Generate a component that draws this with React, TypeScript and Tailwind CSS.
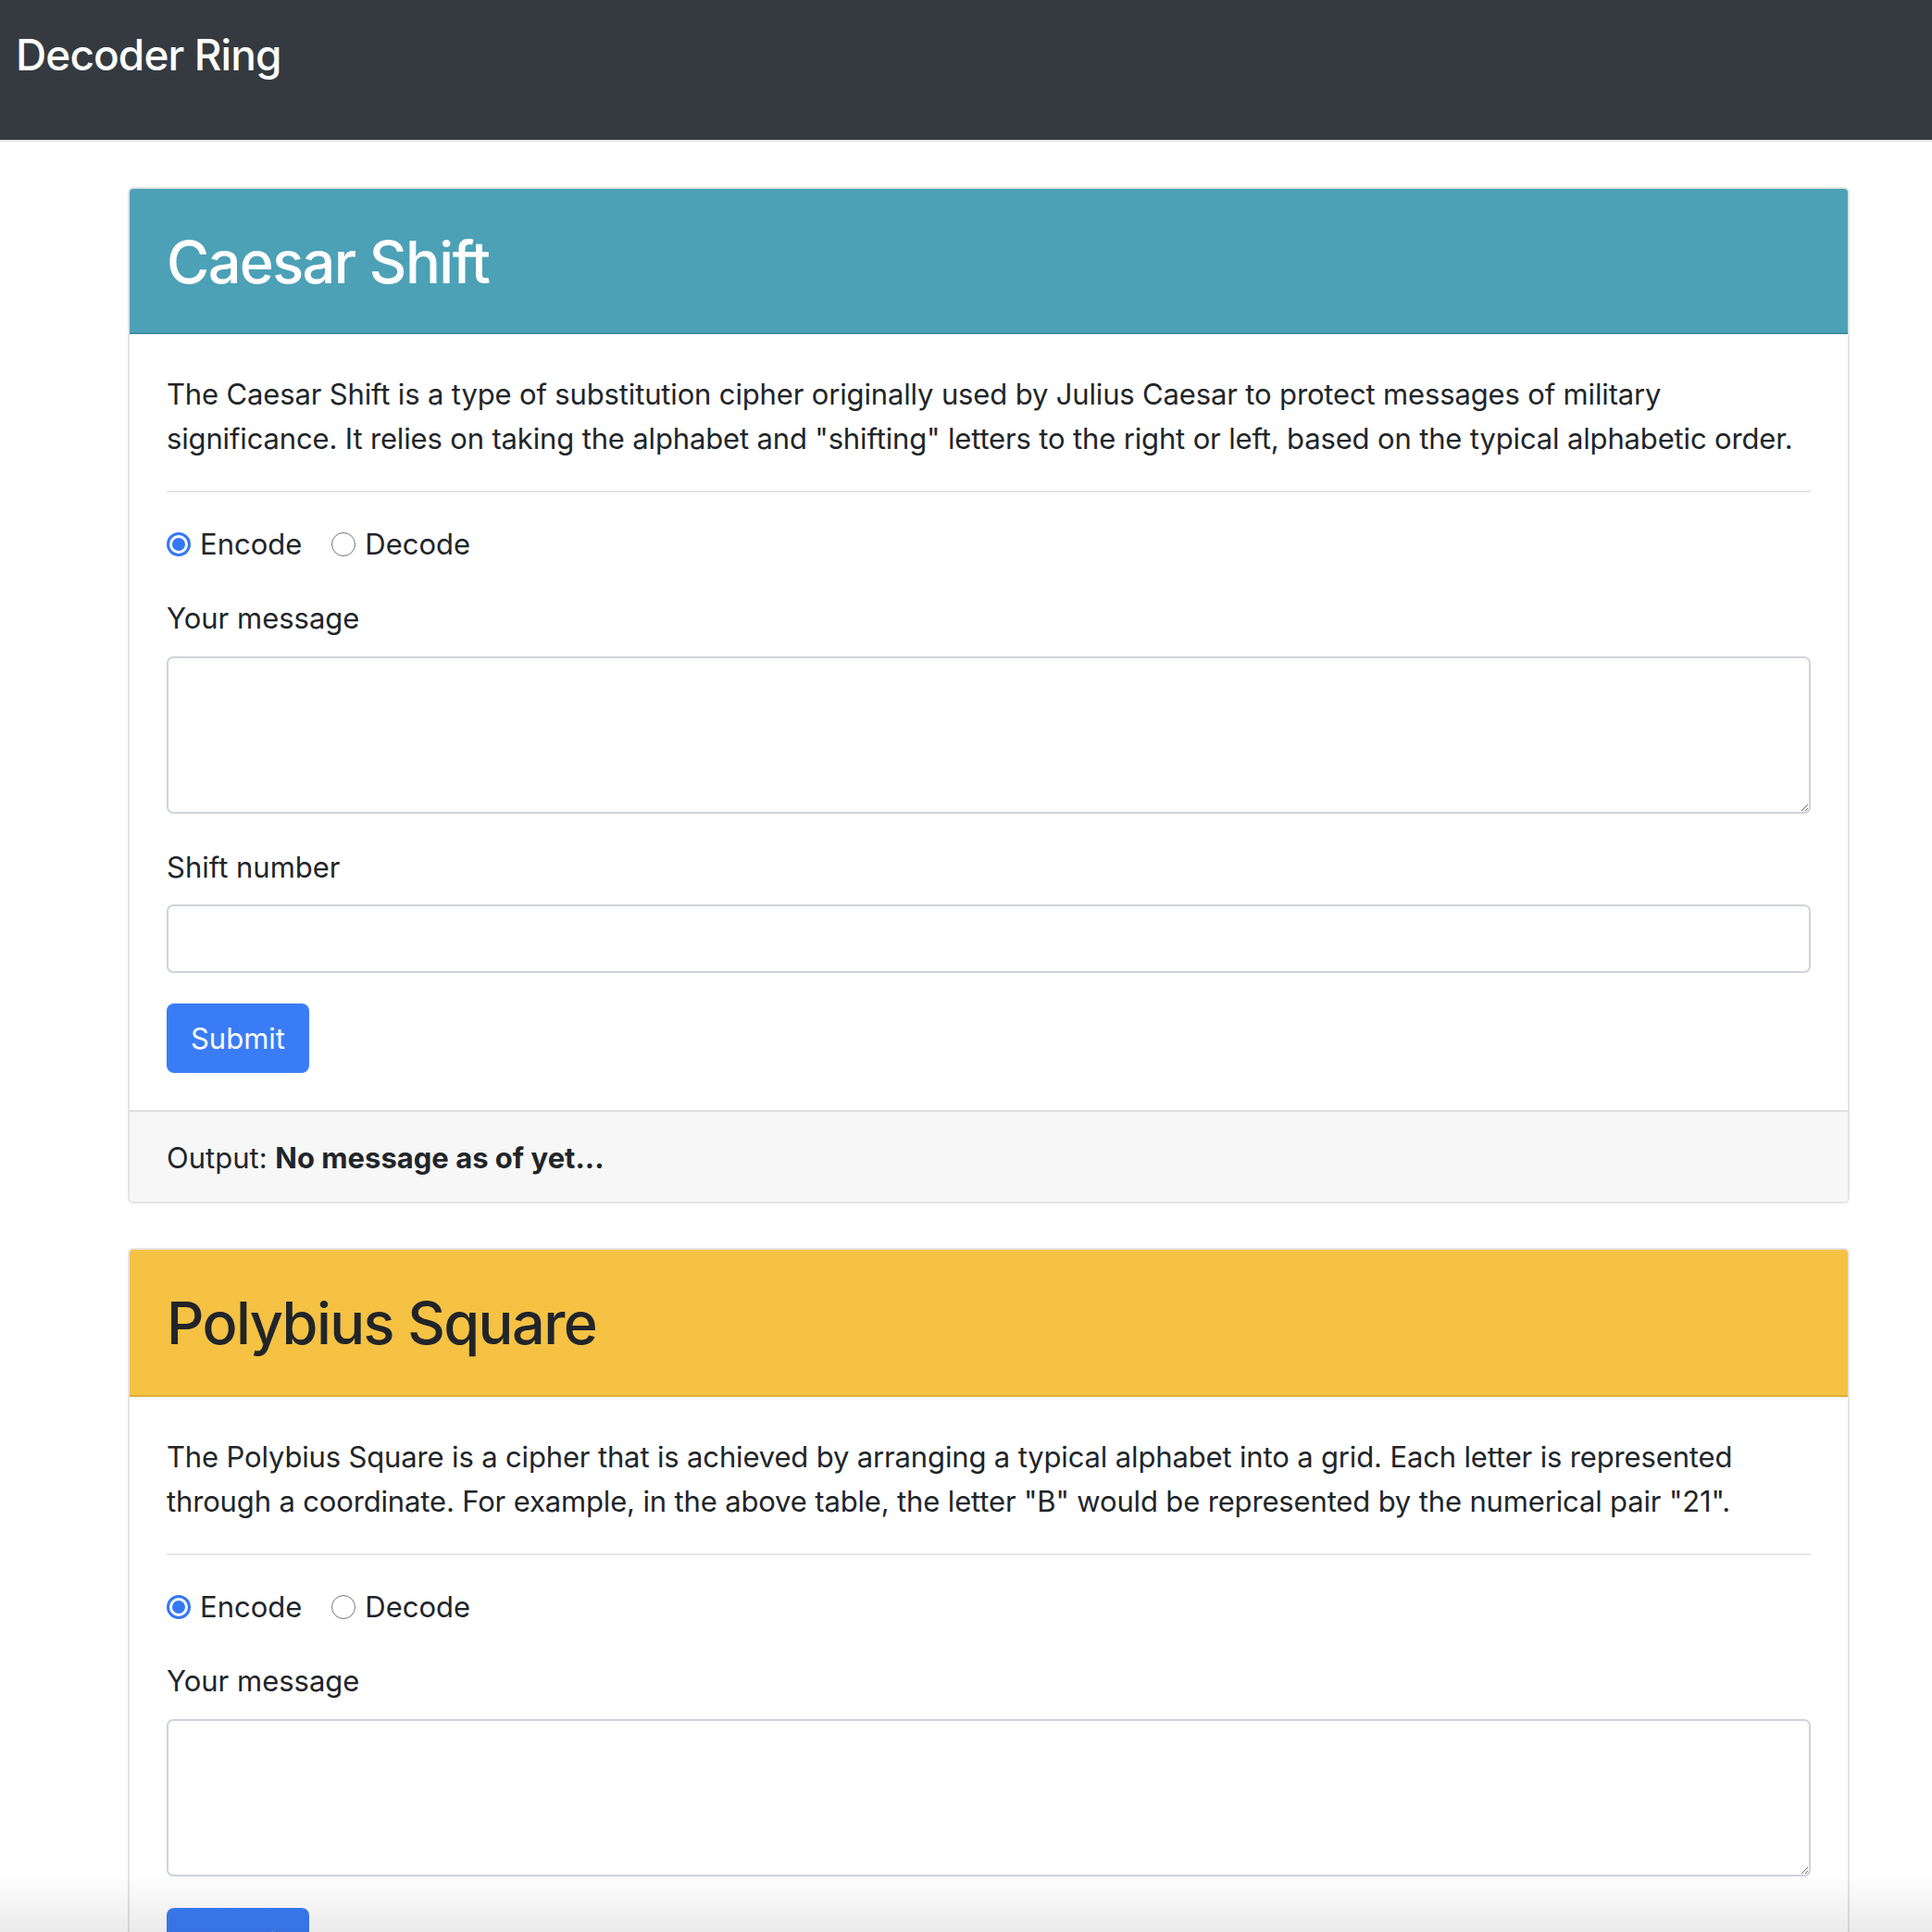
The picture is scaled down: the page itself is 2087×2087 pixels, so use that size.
import React from "react";

const body = { fontFamily: "Inter, 'Liberation Sans', sans-serif" };

function Radios() {
  return (
    <div className="flex h-[48px] items-center text-[31px] text-[#212529]">
      <span className="flex h-[26px] w-[26px] items-center justify-center rounded-full border-[3px] border-[#3478f6] bg-white">
        <span className="h-[14px] w-[14px] rounded-full bg-[#3478f6]" />
      </span>
      <span className="ml-[10px]">Encode</span>
      <span className="ml-[32px] h-[26px] w-[26px] rounded-full border-[1.5px] border-[#767676] bg-white" />
      <span className="ml-[10px]">Decode</span>
    </div>
  );
}

function Card({
  title,
  headerClass,
  titleClass,
  lines,
  shift,
}: {
  title: string;
  headerClass: string;
  titleClass: string;
  lines: string[];
  shift: boolean;
}) {
  return (
    <div className="w-[1860px] overflow-hidden rounded-[6px] border-2 border-[#e4e4e4] bg-white">
      <div className={`border-b-2 px-[40px] pt-[41px] ${headerClass}`}>
        <h2 className={`text-[63px] leading-[77px] font-medium tracking-[-0.025em] ${titleClass}`}>
          {title}
        </h2>
      </div>
      <div className="px-[40px] pb-[40px] pt-[41px] text-[#212529]">
        <p className="mb-[32px] text-[31px] leading-[48px] tracking-[-0.15px]">
          {lines.map((l) => (
            <span key={l} className="block whitespace-nowrap">
              {l}
            </span>
          ))}
        </p>
        <div className="mb-[32px] border-t-2 border-[#e6e6e6]" />
        <div className="mb-[32px]">
          <Radios />
        </div>
        <div className="mb-[17px] text-[31px] leading-[48px]">Your message</div>
        <textarea className="mb-[34px] block h-[170px] w-full rounded-[7px] border-2 border-[#ced4da] bg-white" />
        {shift && (
          <>
            <div className="mb-[16px] text-[31px] leading-[48px]">Shift number</div>
            <input className="mb-[33px] block h-[74px] w-full rounded-[7px] border-2 border-[#ced4da] bg-white" />
          </>
        )}
        <button className="flex h-[75px] w-[154px] items-center justify-center rounded-[8px] bg-[#3a7cf5] pt-[2px] text-[31px] text-white">
          Submit
        </button>
      </div>
      <div className="border-t-2 border-[#dfdfdf] bg-[#f7f7f7] px-[40px] pb-[23px] pt-[26px] text-[31px] leading-[48px] text-[#212529]">
        Output: <span className="font-bold">No message as of yet...</span>
      </div>
    </div>
  );
}

export default function App() {
  return (
    <div className="relative h-[2087px] overflow-hidden bg-white" style={body}>
      <nav className="h-[153px] border-b-2 border-[#e2e3e5] bg-[#343a40] pl-[17px] pt-[31px]">
        <div className="text-[46px] leading-[56px] font-medium tracking-[-0.02em] text-white">
          Decoder Ring
        </div>
      </nav>
      <main className="flex flex-col gap-[48px] pl-[138px] pt-[49px]">
        <Card
          title="Caesar Shift"
          headerClass="pb-[37px] bg-[#4ca1b7] border-[#3f8ea3]"
          titleClass="text-white"
          lines={[
            "The Caesar Shift is a type of substitution cipher originally used by Julius Caesar to protect messages of military",
            'significance. It relies on taking the alphabet and "shifting" letters to the right or left, based on the typical alphabetic order.',
          ]}
          shift={true}
        />
        <Card
          title="Polybius Square"
          headerClass="pb-[39px] bg-[#f5c244] border-[#ddab36]"
          titleClass="text-[#212529]"
          lines={[
            "The Polybius Square is a cipher that is achieved by arranging a typical alphabet into a grid. Each letter is represented",
            'through a coordinate. For example, in the above table, the letter "B" would be represented by the numerical pair "21".',
          ]}
          shift={false}
        />
      </main>
      <div className="pointer-events-none absolute bottom-0 left-0 right-0 h-[64px] bg-linear-to-b from-transparent to-black/[0.08]" />
    </div>
  );
}
